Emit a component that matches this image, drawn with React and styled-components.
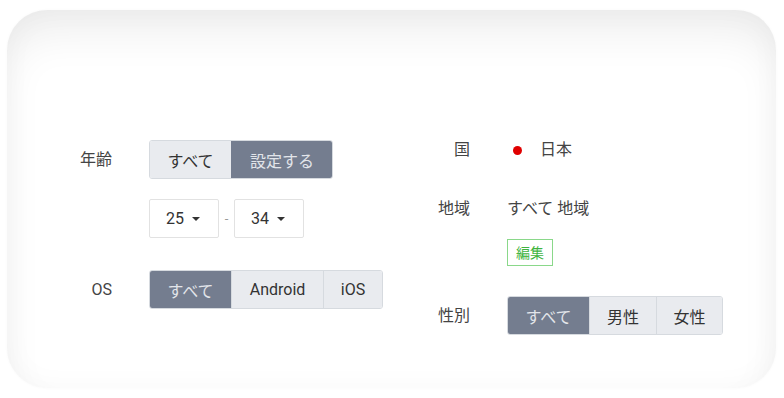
import React from "react";
import styled, { createGlobalStyle } from "styled-components";

const Global = createGlobalStyle`
  html, body { margin: 0; padding: 0; background: #ffffff; }
  body { font-family: Roboto, "Noto Sans CJK JP", sans-serif; color: #333; }
`;

const Page = styled.div`
  width: 784px;
  height: 398px;
  padding: 10px 8px 10px 7px;
  box-sizing: border-box;
`;

const Card = styled.div`
  height: 378px;
  border-radius: 40px;
  background: #ffffff;
  box-shadow: inset 0 28px 44px -6px rgba(0, 0, 0, 0.07),
    inset 0 0 30px rgba(0, 0, 0, 0.03), 0 0 3px rgba(0, 0, 0, 0.03);
  display: flex;
  align-items: flex-start;
  padding: 130px 0 0 53px;
  box-sizing: border-box;
`;

const Section = styled.div`
  display: flex;
  flex-direction: column;
  width: ${(p) => p.$width || "auto"};
`;

const Field = styled.div`
  display: grid;
  grid-template-columns: ${(p) => p.$label}px auto;
  column-gap: 37px;
  align-items: center;
  min-height: ${(p) => p.$h || 0}px;
  margin-top: ${(p) => p.$mt || 0}px;
`;

const Label = styled.div`
  text-align: right;
  font-size: 16px;
  line-height: 20px;
  color: #444;
  white-space: nowrap;
`;

const Group = styled.div`
  display: inline-flex;
  justify-self: start;
  border: 1px solid #d6dadf;
  border-radius: 3px;
  overflow: hidden;
  height: 39px;
  box-sizing: border-box;
`;

const Seg = styled.div`
  width: ${(p) => p.$w}px;
  box-sizing: border-box;
  display: flex;
  align-items: center;
  justify-content: center;
  font-size: 16px;
  background: ${(p) => (p.$on ? "#747d8f" : "#e9ebef")};
  color: ${(p) => (p.$on ? "#e2e5ea" : "#333")};
  border-left: ${(p) => (p.$first ? "none" : "1px solid #d6dadf")};
  ${(p) => (p.$on ? "border-left-color: #747d8f;" : "")}
`;

const Range = styled.div`
  display: flex;
  align-items: center;
`;

const Select = styled.div`
  width: 70px;
  height: 39px;
  box-sizing: border-box;
  border: 1px solid #e2e2e2;
  border-radius: 2px;
  background: #fff;
  display: flex;
  align-items: center;
  padding-left: 16px;
  gap: 8px;
  font-size: 16px;
  color: #333;
`;

const Caret = styled.span`
  width: 0;
  height: 0;
  border-left: 4px solid transparent;
  border-right: 4px solid transparent;
  border-top: 4px solid #333;
`;

const Dash = styled.span`
  width: 15px;
  text-align: center;
  color: #999;
  font-size: 13px;
`;

const Country = styled.div`
  display: flex;
  align-items: center;
  font-size: 16px;
  line-height: 20px;
  color: #444;
  padding-left: 6px;
`;

const Dot = styled.span`
  width: 9px;
  height: 9px;
  border-radius: 50%;
  background: #e00000;
  margin-right: 18px;
`;

const Text = styled.div`
  font-size: 16px;
  line-height: 20px;
  color: #444;
`;

const Tag = styled.div`
  justify-self: start;
  grid-column: 2;
  height: 27px;
  width: 46px;
  box-sizing: border-box;
  border: 1px solid #8ad88a;
  color: #3fb43f;
  font-size: 14px;
  line-height: 20px;
  display: flex;
  align-items: center;
  justify-content: center;
`;

export default function App() {
  return (
    <Page>
      <Global />
      <Card>
        <Section $width="360px">
          <Field $label={52}>
            <Label>年齢</Label>
            <Group>
              <Seg $w={81} $first>すべて</Seg>
              <Seg $w={101} $on>設定する</Seg>
            </Group>
          </Field>
          <Field $label={52} $mt={20}>
            <span />
            <Range>
              <Select>25<Caret /></Select>
              <Dash>-</Dash>
              <Select>34<Caret /></Select>
            </Range>
          </Field>
          <Field $label={52} $mt={32}>
            <Label>OS</Label>
            <Group>
              <Seg $w={81} $first $on>すべて</Seg>
              <Seg $w={92}>Android</Seg>
              <Seg $w={59}>iOS</Seg>
            </Group>
          </Field>
        </Section>
        <Section>
          <Field $label={50} $h={20}>
            <Label>国</Label>
            <Country>
              <Dot />
              日本
            </Country>
          </Field>
          <Field $label={50} $h={20} $mt={39}>
            <Label>地域</Label>
            <Text>すべて 地域</Text>
          </Field>
          <Field $label={50} $mt={20}>
            <Tag>編集</Tag>
          </Field>
          <Field $label={50} $mt={30}>
            <Label>性別</Label>
            <Group>
              <Seg $w={81} $first $on>すべて</Seg>
              <Seg $w={67}>男性</Seg>
              <Seg $w={66}>女性</Seg>
            </Group>
          </Field>
        </Section>
      </Card>
    </Page>
  );
}
